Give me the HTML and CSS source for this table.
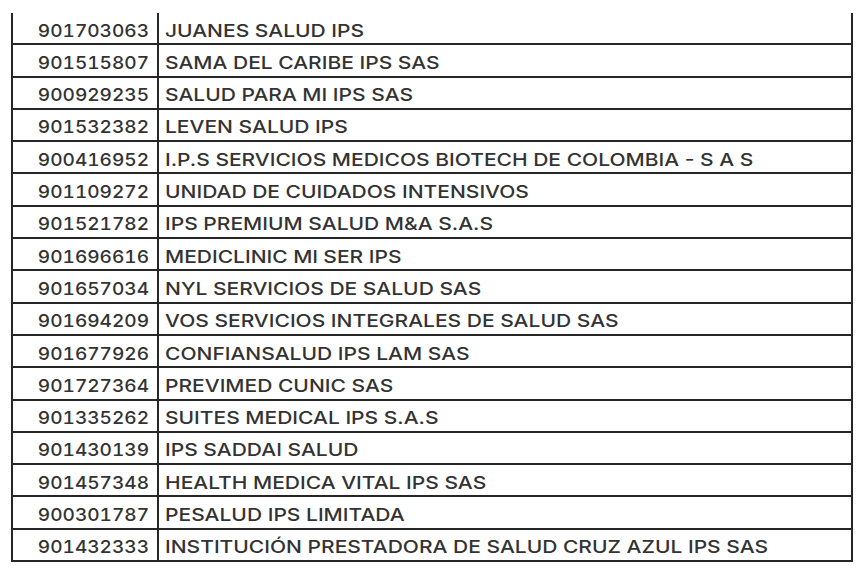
FILE: index.html
```html
<!DOCTYPE html>
<html lang="es">
<head>
<meta charset="utf-8">
<link rel="stylesheet" href="styles.css">
</head>
<body>
<div class="sheet">
  <div class="table">
    <div class="row"><div class="nit"><span>901703063</span></div><div class="name"><span>JUANES SALUD IPS</span></div></div>
    <div class="row"><div class="nit"><span>901515807</span></div><div class="name"><span>SAMA DEL CARIBE IPS SAS</span></div></div>
    <div class="row"><div class="nit"><span>900929235</span></div><div class="name"><span>SALUD PARA MI IPS SAS</span></div></div>
    <div class="row"><div class="nit"><span>901532382</span></div><div class="name"><span>LEVEN SALUD IPS</span></div></div>
    <div class="row"><div class="nit"><span>900416952</span></div><div class="name"><span>I.P.S SERVICIOS MEDICOS BIOTECH DE COLOMBIA - S A S</span></div></div>
    <div class="row"><div class="nit"><span>901109272</span></div><div class="name"><span>UNIDAD DE CUIDADOS INTENSIVOS</span></div></div>
    <div class="row"><div class="nit"><span>901521782</span></div><div class="name"><span>IPS PREMIUM SALUD M&amp;A S.A.S</span></div></div>
    <div class="row"><div class="nit"><span>901696616</span></div><div class="name"><span>MEDICLINIC Ml SER IPS</span></div></div>
    <div class="row"><div class="nit"><span>901657034</span></div><div class="name"><span>NYL SERVICIOS DE SALUD SAS</span></div></div>
    <div class="row"><div class="nit"><span>901694209</span></div><div class="name"><span>VOS SERVICIOS INTEGRALES DE SALUD SAS</span></div></div>
    <div class="row"><div class="nit"><span>901677926</span></div><div class="name"><span>CONFIANSALUD IPS LAM SAS</span></div></div>
    <div class="row"><div class="nit"><span>901727364</span></div><div class="name"><span>PREVIMED CUNIC SAS</span></div></div>
    <div class="row"><div class="nit"><span>901335262</span></div><div class="name"><span>SUITES MEDICAL IPS S.A.S</span></div></div>
    <div class="row"><div class="nit"><span>901430139</span></div><div class="name"><span>IPS SADDAI SALUD</span></div></div>
    <div class="row"><div class="nit"><span>901457348</span></div><div class="name"><span>HEALTH MEDICA VITAL IPS SAS</span></div></div>
    <div class="row"><div class="nit"><span>900301787</span></div><div class="name"><span>PESALUD IPS LIMITADA</span></div></div>
    <div class="row"><div class="nit"><span>901432333</span></div><div class="name"><span>INSTITUCIÓN PRESTADORA DE SALUD CRUZ AZUL IPS SAS</span></div></div>
  </div>
</div>
</body>
</html>
```
FILE: styles.css
```css
html, body {
  margin: 0;
  padding: 0;
  background: #ffffff;
}
.sheet {
  padding: 13px 0 0 11px;
}
.table {
  width: 842px;
  border-left: 2px solid #262626;
  border-right: 2px solid #262626;
  box-sizing: border-box;
  font-family: "Inter", "Open Sans", sans-serif;
  font-size: 17.5px;
  font-weight: 500;
  line-height: 1;
  color: #333333;
}
.row {
  display: flex;
  height: 32.31px;
  box-sizing: border-box;
  border-bottom: 2px solid #262626;
}
.nit {
  width: 146px;
  box-sizing: border-box;
  border-right: 2px solid #262626;
  display: flex;
  align-items: center;
  justify-content: flex-end;
  padding: 4.4px 8px 0 0;
  font-variant-numeric: tabular-nums;
}
.name {
  flex: 1;
  display: flex;
  align-items: center;
  padding: 4.4px 0 0 6px;
}
.nit span,
.name span {
  display: inline-block;
  white-space: nowrap;
}
.nit span {
  transform: scaleX(1.09);
  transform-origin: right center;
}
.name span {
  transform: scaleX(1.2);
  transform-origin: left center;
}
```
